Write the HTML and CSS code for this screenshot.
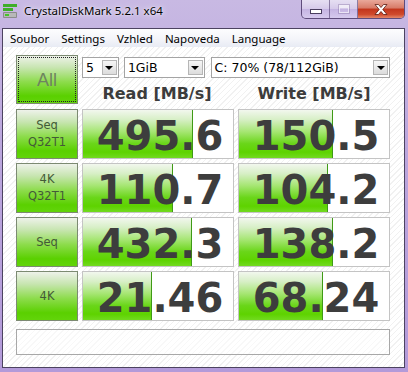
FILE: index.html
```html
<!DOCTYPE html>
<html lang="cs">

<head>
	<meta charset="UTF-8">
	<meta name="viewport" content="width=device-width, initial-scale=1.0">
	<title>CrystalDiskMark 5.2.1 x64</title>
	<link rel="stylesheet" href="styles.css">
</head>

<body>
	<div class="window">
		<div class="titlebar">
			<svg class="appIcon" width="14" height="15" viewBox="0 0 14 15">
				<rect x="0" y="0" width="14" height="3" fill="#3fae2a" />
				<rect x="0" y="4" width="10" height="3" fill="#3fae2a" />
				<rect x="0" y="8" width="14" height="6" rx="1" fill="#8c8c8c" />
				<rect x="1" y="9" width="12" height="4" fill="#b8b8b8" />
				<rect x="2" y="10" width="4" height="2" fill="#46c22c" />
			</svg>
			<span class="title">CrystalDiskMark 5.2.1 x64</span>
			<div class="captionButtons">
				<div class="capBtn minBtn"><span class="minGlyph"></span></div>
				<div class="capBtn maxBtn"><span class="maxGlyph"></span></div>
				<div class="capBtn closeBtn">
					<svg width="14" height="11" viewBox="0 0 14 11">
						<path d="M1 0.5h3.5l2.5 3 2.5-3h3.5l-4.2 5 4.2 5h-3.5l-2.5-3-2.5 3h-3.5l4.2-5z" fill="#fff" stroke="#5a1a10" stroke-width="0.8" />
					</svg>
				</div>
			</div>
		</div>
		<div class="client">
			<div class="menubar">
				<span>Soubor</span>
				<span>Settings</span>
				<span>Vzhled</span>
				<span>Napoveda</span>
				<span>Language</span>
			</div>
			<div class="board">
				<div class="allButton"><span>All</span></div>
				<div class="controls">
					<div class="selects">
						<div class="combo comboCount"><span>5</span><i class="comboArrow"></i></div>
						<div class="combo comboSize"><span>1GiB</span><i class="comboArrow"></i></div>
						<div class="combo comboDrive"><span>C: 70% (78/112GiB)</span><i class="comboArrow"></i></div>
					</div>
					<div class="headers">
						<div>Read [MB/s]</div>
						<div>Write [MB/s]</div>
					</div>
				</div>

				<div class="label">Seq<br>Q32T1</div>
				<div class="cell"><div class="bar" style="width: 110px"></div><div class="num">495.6</div></div>
				<div class="cell"><div class="bar" style="width: 94px"></div><div class="num">150.5</div></div>

				<div class="label">4K<br>Q32T1</div>
				<div class="cell"><div class="bar" style="width: 90px"></div><div class="num">110.7</div></div>
				<div class="cell"><div class="bar" style="width: 89px"></div><div class="num">104.2</div></div>

				<div class="label">Seq</div>
				<div class="cell"><div class="bar" style="width: 109px"></div><div class="num">432.3</div></div>
				<div class="cell"><div class="bar" style="width: 94px"></div><div class="num">138.2</div></div>

				<div class="label">4K</div>
				<div class="cell"><div class="bar" style="width: 69px"></div><div class="num">21.46</div></div>
				<div class="cell"><div class="bar" style="width: 84px"></div><div class="num">68.24</div></div>

				<div class="status"></div>
			</div>
		</div>
	</div>
</body>

</html>
```
FILE: styles.css
```css
body,
html {
	margin: 0;
	padding: 0;
	height: 100%;
}

.window {
	height: 100%;
	box-sizing: border-box;
	display: flex;
	flex-direction: column;
	padding: 0 3px 4px 2px;
	background: linear-gradient(to bottom, #c8b9e3 0%, #bba6dd 40%, #b39ad9 100%);
}

.titlebar {
	height: 28px;
	display: flex;
	align-items: flex-start;
	flex: 0 0 auto;
}

.appIcon {
	margin: 4px 0 0 1px;
	flex: 0 0 auto;
}

.title {
	margin: 3px 0 0 7px;
	font-family: "Noto Sans", sans-serif;
	font-size: 11.5px;
	color: #000;
	text-shadow: 0 0 6px rgba(255, 255, 255, 0.9), 0 0 2px rgba(255, 255, 255, 0.8);
}

.captionButtons {
	margin-left: auto;
	margin-right: 0;
	display: flex;
	height: 18px;
	border: 1px solid rgba(60, 40, 90, 0.75);
	border-top: none;
	border-radius: 0 0 5px 5px;
	overflow: hidden;
}

.capBtn {
	height: 18px;
	display: flex;
	align-items: center;
	justify-content: center;
}

.minBtn,
.maxBtn {
	width: 27px;
	background: linear-gradient(to bottom, rgba(255, 255, 255, 0.55) 0%, rgba(255, 255, 255, 0.25) 50%, rgba(190, 170, 225, 0.3) 51%, rgba(230, 220, 250, 0.5) 100%);
	border-right: 1px solid rgba(70, 50, 100, 0.55);
}

.minGlyph {
	width: 10px;
	height: 3px;
	margin-top: 5px;
	background: #fff;
	border: 1px solid #4a3e60;
}

.maxGlyph {
	width: 8px;
	height: 6px;
	border: 1px solid rgba(255, 255, 255, 0.6);
	outline: 1px solid rgba(120, 100, 150, 0.35);
	box-shadow: inset 0 2px 0 rgba(255, 255, 255, 0.6);
}

.closeBtn {
	width: 46px;
	background: linear-gradient(to bottom, #e9a89a 0%, #d77a67 45%, #c2351c 50%, #cf4a2c 80%, #e4886a 100%);
}

.client {
	flex: 1;
	border: 1px solid #4c4360;
	background-color: #fff;
	background-image: repeating-linear-gradient(135deg, #fff 0 3px, #f1f1f1 3px 4px);
	display: flex;
	flex-direction: column;
}

.menubar {
	height: 18px;
	display: flex;
	align-items: center;
	padding-left: 1px;
	background: linear-gradient(to bottom, #fdfdfe 0%, #f3f4f9 60%, #e8ebf4 100%);
	font-family: "Noto Sans", sans-serif;
	font-size: 11.5px;
	color: #000;
}

.menubar span {
	padding: 0 6px;
}

.board {
	display: grid;
	grid-template-columns: 62px 152px 152px;
	grid-template-rows: 50px repeat(4, 50px) 30px;
	column-gap: 4px;
	row-gap: 4px;
	padding: 8px 0 0 13px;
}

.allButton {
	height: 49px;
	box-sizing: border-box;
	border: 1px solid #7c8a72;
	background: linear-gradient(to bottom, #eef2ea 0%, #c7e5b0 25%, #8ddc4c 55%, #5ad000 85%, #62d40a 100%);
	display: flex;
	align-items: center;
	justify-content: center;
	padding: 1px;
}

.allButton span {
	flex: 1;
	align-self: stretch;
	display: flex;
	align-items: center;
	justify-content: center;
	border: 1px dotted #222;
	font-family: "Liberation Sans", sans-serif;
	font-size: 18px;
	color: #6e8460;
	padding-top: 2px;
}

.controls {
	grid-column: 2 / 4;
	display: flex;
	flex-direction: column;
}

.selects {
	display: flex;
	margin-top: 2px;
}

.combo {
	height: 21px;
	box-sizing: border-box;
	border: 1px solid #a4a4a4;
	background: #fff;
	display: flex;
	align-items: center;
	font-family: "DejaVu Sans", sans-serif;
	font-size: 12.5px;
	color: #000;
}

.combo span {
	flex: 1;
	padding-left: 3px;
}

.comboCount {
	width: 37px;
}

.comboSize {
	width: 81px;
	margin-left: 5px;
}

.comboDrive {
	width: 180px;
	margin-left: 6px;
}

.comboArrow {
	width: 15px;
	height: 15px;
	margin-right: 1px;
	box-sizing: border-box;
	border: 1px solid #b6b6b6;
	background: linear-gradient(to bottom, #f6f6f6, #dcdcdc);
	display: flex;
	align-items: center;
	justify-content: center;
}

.comboArrow::after {
	content: "";
	border-left: 4px solid transparent;
	border-right: 4px solid transparent;
	border-top: 4px solid #000;
	margin-top: 1px;
}

.headers {
	display: grid;
	grid-template-columns: 152px 152px;
	column-gap: 4px;
	margin-top: 6px;
	font-family: "DejaVu Sans", sans-serif;
	font-weight: bold;
	font-size: 16px;
	color: #3c3c3c;
	text-align: center;
}

.headers div:first-child {
	padding-right: 2px;
}

.label {
	box-sizing: border-box;
	border: 1px solid #7c8a72;
	background: linear-gradient(to bottom, #eef2ea 0%, #c7e5b0 25%, #8ddc4c 55%, #5ad000 85%, #62d40a 100%);
	display: flex;
	align-items: center;
	justify-content: center;
	text-align: center;
	font-family: "DejaVu Sans", sans-serif;
	font-size: 11.5px;
	line-height: 17px;
	color: #435a38;
}

.cell {
	box-sizing: border-box;
	border: 1px solid #c4c4c4;
	background: #fff;
	display: grid;
}

.bar,
.num {
	grid-area: 1 / 1;
}

.bar {
	justify-self: start;
	box-sizing: border-box;
	border-right: 1px solid #3f9a16;
	background: linear-gradient(to bottom, #f2f7ee 0%, #d7efc6 20%, #a6e673 45%, #6ad619 70%, #5ed300 88%, #72da20 100%);
}

.num {
	align-self: center;
	text-align: center;
	font-family: "DejaVu Sans", sans-serif;
	font-weight: bold;
	font-size: 40px;
	line-height: 40px;
	padding: 4px 0 0 4px;
	color: #3d3d3d;
}

.status {
	grid-column: 1 / 4;
	margin-top: 4px;
	border: 1px solid #a8a8a8;
	background: rgba(255, 255, 255, 0.5);
}
```
